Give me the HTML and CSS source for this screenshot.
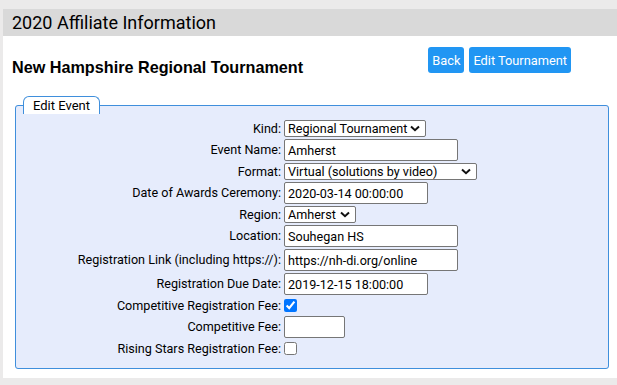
FILE: index.html
```html
<!DOCTYPE html>
<html>
<head>
<meta charset="utf-8">
<link rel="stylesheet" href="styles.css">
</head>
<body>
<div class="page">
  <h1 class="page-title">2020 Affiliate Information</h1>
  <div class="title-row">
    <h2 class="event-title">New Hampshire Regional Tournament</h2>
    <div class="actions">
      <button class="btn">Back</button>
      <button class="btn">Edit Tournament</button>
    </div>
  </div>
  <fieldset class="edit-box">
    <legend class="edit-legend">Edit Event</legend>
    <div class="form-grid">
      <label class="lbl">Kind:</label>
      <div class="fld"><select class="sel sel-kind"><option>Regional Tournament</option></select></div>

      <label class="lbl">Event Name:</label>
      <div class="fld"><input class="txt txt-long" type="text" value="Amherst"></div>

      <label class="lbl">Format:</label>
      <div class="fld"><select class="sel sel-format"><option>Virtual (solutions by video)</option></select></div>

      <label class="lbl">Date of Awards Ceremony:</label>
      <div class="fld"><input class="txt txt-date" type="text" value="2020-03-14 00:00:00"></div>

      <label class="lbl">Region:</label>
      <div class="fld"><select class="sel sel-region"><option>Amherst</option></select></div>

      <label class="lbl">Location:</label>
      <div class="fld"><input class="txt txt-long" type="text" value="Souhegan HS"></div>

      <label class="lbl">Registration Link (including https://):</label>
      <div class="fld"><input class="txt txt-long" type="text" value="https://nh-di.org/online"></div>

      <label class="lbl">Registration Due Date:</label>
      <div class="fld"><input class="txt txt-date" type="text" value="2019-12-15 18:00:00"></div>

      <label class="lbl">Competitive Registration Fee:</label>
      <div class="fld"><input class="chk" type="checkbox" checked></div>

      <label class="lbl">Competitive Fee:</label>
      <div class="fld"><input class="txt txt-fee" type="text" value=""></div>

      <label class="lbl">Rising Stars Registration Fee:</label>
      <div class="fld"><input class="chk" type="checkbox"></div>
    </div>
  </fieldset>
</div>
</body>
</html>
```
FILE: styles.css
```css
html {
  background: #ebeaea;
  overflow: hidden;
}
body {
  margin: 0;
  padding: 9px 0 0 3px;
  font-family: Roboto, "Liberation Sans", sans-serif;
  color: #000;
}
.page {
  background: #fff;
  height: 369px;
}
.page-title {
  margin: 0;
  height: 27px;
  line-height: 27px;
  background: #d9d9d9;
  font-family: Roboto, "Liberation Sans", sans-serif;
  font-size: 18px;
  font-weight: 400;
  padding-left: 9px;
  color: #000;
}
.title-row {
  display: flex;
  align-items: flex-start;
  height: 60px;
}
.event-title {
  margin: 22px 0 0 9px;
  font-family: "Liberation Sans", Arial, sans-serif;
  font-size: 16.2px;
  font-weight: 700;
  line-height: 18px;
}
.actions {
  margin: 11px 46px 0 auto;
  display: flex;
  gap: 5px;
}
.btn {
  background: #2196f3;
  color: #fff;
  border: none;
  border-radius: 3px;
  height: 26px;
  padding: 0 4px;
  font-family: Roboto, "Liberation Sans", sans-serif;
  font-size: 12.8px;
}
.edit-box {
  margin: 0 8px 0 12px;
  border: 1px solid #3f8fdc;
  border-radius: 3px;
  background: #e6ecfc;
  padding: 6px 0 11px 0;
  min-width: 0;
}
.edit-legend {
  margin-left: 7px;
  padding: 0 9px 0 9px;
  height: 18px;
  line-height: 18px;
  box-sizing: border-box;
  background: #fff;
  border: 1px solid #3f8fdc;
  border-bottom: none;
  border-radius: 6px 6px 0 0;
  font-size: 13px;
  color: #000;
}
.form-grid {
  display: grid;
  grid-template-columns: 265px 1fr;
  column-gap: 3px;
  row-gap: 2px;
  align-items: center;
}
.lbl {
  text-align: right;
  font-size: 12.6px;
  line-height: 16px;
  white-space: nowrap;
}
.fld {
  display: flex;
  align-items: center;
}
.sel {
  -webkit-appearance: none;
  appearance: none;
  font-family: Roboto, "Liberation Sans", sans-serif;
  font-size: 12.6px;
  height: 17px;
  line-height: 15px;
  padding: 0 0 0 3px;
  border: 1px solid #767676;
  border-radius: 2px;
  background-color: #fff;
  background-image: url("data:image/svg+xml;utf8,<svg xmlns='http://www.w3.org/2000/svg' width='10' height='7' viewBox='0 0 10 7'><path d='M1 1.5 L5 5.2 L9 1.5' fill='none' stroke='%23111' stroke-width='2'/></svg>");
  background-repeat: no-repeat;
  background-position: right 5px center;
  color: #000;
}
.sel-kind { width: 142px; }
.sel-format { width: 193px; }
.sel-region { width: 72px; }
.txt {
  font-family: Roboto, "Liberation Sans", sans-serif;
  font-size: 12.6px;
  height: 22px;
  box-sizing: border-box;
  border: 1px solid #767676;
  border-radius: 2px;
  padding: 0 3px;
  margin: 0;
  color: #000;
  background: #fff;
}
.txt-long { width: 174px; }
.txt-date { width: 144px; }
.txt-fee { width: 61px; }
.chk {
  margin: 2px 0;
  width: 13px;
  height: 13px;
}
```
